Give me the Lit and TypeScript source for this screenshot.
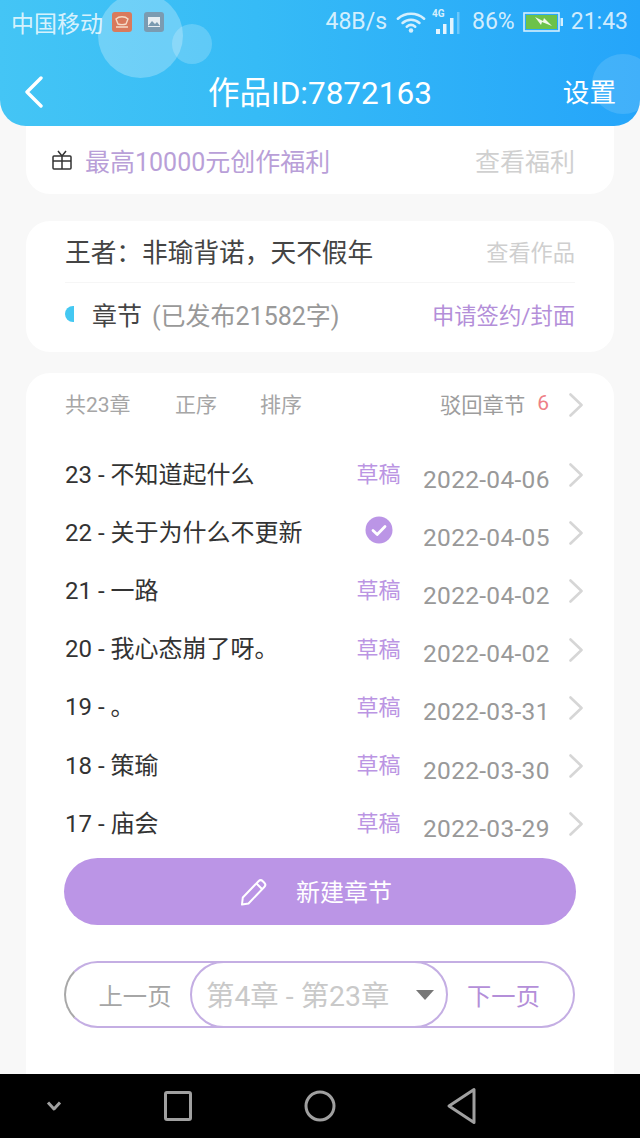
import { LitElement, html, css } from "lit";
import { customElement } from "lit/decorators.js";

const chevron = html`<svg class="chev" width="16" height="24" viewBox="0 0 16 24"><path d="M2.500 1.500 13.500 12 2.500 22.500" fill="none" stroke="#d6d6d6" stroke-width="2.600" stroke-linecap="round" stroke-linejoin="round"/></svg>`;

const rows = [
  ["23 - 不知道起什么", "草稿", "2022-04-06"],
  ["22 - 关于为什么不更新", "", "2022-04-05"],
  ["21 - 一路", "草稿", "2022-04-02"],
  ["20 - 我心态崩了呀。", "草稿", "2022-04-02"],
  ["19 - 。", "草稿", "2022-03-31"],
  ["18 - 策瑜", "草稿", "2022-03-30"],
  ["17 - 庙会", "草稿", "2022-03-29"],
];

@customElement("app-root")
export class AppRoot extends LitElement {
  static styles = css`
    :host {
      display: flex;
      flex-direction: column;
      width: 640px;
      height: 1138px;
      overflow: hidden;
      background: #f8f8f8;
      font-family: Roboto, "Noto Sans CJK SC", sans-serif;
    }
    .header {
      position: relative;
      z-index: 1;
      flex: none;
      height: 126px;
      overflow: hidden;
      box-sizing: border-box;
      border-radius: 0 0 26px 26px;
      background: linear-gradient(90deg, #44c5f5 0%, #36bbf6 40%, #25a5fa 100%);
      color: #fff;
    }
    .bubble { position: absolute; border-radius: 50%; }
    .b1 { left: 98px; top: -7px; width: 85px; height: 85px; background: rgba(255,255,255,.26); }
    .b2 { left: 172px; top: 24px; width: 40px; height: 40px; background: rgba(255,255,255,.2); }
    .b3 { left: 592px; top: 54px; width: 62px; height: 60px; background: rgba(255,255,255,.13); }
    .status {
      position: relative;
      display: flex;
      align-items: center;
      box-sizing: border-box;
      height: 44px;
      padding: 0 12px 1px;
      font-size: 23px;
      color: rgba(255,255,255,.8);
    }
    .carrier { width: 100px; white-space: nowrap; margin-left: -1px; margin-right: 1px; }
    .nicon { width: 20px; height: 20px; border-radius: 3px; margin-right: 12px; display: flex; }
    .n1 { background: #d97a5c; }
    .n2 { background: #7b9bb1; }
    .spacer { flex: 1; }
    .speed { margin-right: 9px; }
    .sig { margin-left: 6px; }
    .pct { margin-left: 11px; margin-right: 8px; }
    .clock { margin-left: 8px; }
    .nav {
      position: relative;
      display: grid;
      grid-template-columns: 80px 1fr 80px;
      align-items: center;
      height: 82px;
      padding: 10px 24px 0;
      box-sizing: border-box;
    }
    .back { display: flex; margin-top: 4px; }
    .title { text-align: center; font-size: 31.5px; white-space: nowrap; }
    .settings { text-align: right; font-size: 26.6px; }
    .page {
      flex: 1;
      display: flex;
      flex-direction: column;
      min-height: 0;
      margin-top: -26px;
      padding: 0 26px;
    }
    .card {
      background: #fff;
      border-radius: 24px;
      box-sizing: border-box;
    }
    .gift {
      display: flex;
      align-items: center;
      height: 94px;
      padding: 25px 39px 0 26px;
      flex: none;
    }
    .gift svg { margin-right: 13px; margin-top: 1px; }
    .gift-t { font-size: 25px; color: #b99fd8; flex: 1; }
    .gift-l { font-size: 25px; color: #d0d0d0; }
    .work { flex: none; height: 131px; margin-top: 27px; padding: 0 39px; }
    .w1 {
      display: flex;
      align-items: center;
      justify-content: space-between;
      height: 62px;
      box-sizing: border-box;
      padding-bottom: 2px;
      border-bottom: 1px solid #f6f6f6;
    }
    .wt { font-size: 25.7px; color: #444; white-space: nowrap; }
    .wl { font-size: 22.2px; color: #cfcfcf; }
    .w2 { display: flex; align-items: center; box-sizing: border-box; height: 66px; padding-bottom: 5px; }
    .half { width: 9px; height: 16px; border-radius: 9px 0 0 9px; background: #44c8f2; margin-right: 18px; }
    .ch { font-size: 25px; color: #444; margin-right: 10px; }
    .pub { flex: 1; font-size: 25px; color: #999; white-space: nowrap; }
    .apply { font-size: 22.3px; color: #b48fd9; white-space: nowrap; }
    .list {
      flex: 1;
      margin-top: 21px;
      padding: 0 30px 0 39px;
      border-radius: 24px 24px 0 0;
      min-height: 0;
      display: flex;
      flex-direction: column;
    }
    .tools { display: flex; align-items: center; height: 60px; font-size: 21px; color: #a6a6a6; flex: none; }
    .tools span:nth-child(1) { width: 110px; }
    .tools span:nth-child(2) { width: 85px; }
    .tools .sp { flex: 1; }
    .rej { color: #9d9d9d; margin-right: 12px; font-size: 21.3px; }
    .num { color: #ee7f86; margin-right: 19px; }
    .tools .chev { margin-top: 4px; }
    .rows { flex: none; margin-top: 10px; }
    .row { display: flex; align-items: center; height: 58.2px; }
    .rname { flex: 1; font-size: 24px; color: #333; white-space: nowrap; }
    .state { width: 44px; font-size: 22px; color: #bb95e3; margin-right: 22.5px; display: flex; justify-content: center; white-space: nowrap; }
    .date { width: 128px; font-size: 24.5px; color: #999; margin-top: 14px; letter-spacing: .3px; margin-right: 17px; white-space: nowrap; }
    .row .chev { flex: none; margin-top: 6px; }
    .new {
      flex: none;
      display: flex;
      align-items: center;
      justify-content: center;
      gap: 28px;
      height: 67px;
      margin: 8px 8px 0 -1px;
      padding: 0 8px 3px 0;
      box-sizing: border-box;
      border-radius: 34px;
      background: #bb95e6;
      color: #fff;
      font-size: 24px;
    }
    .new svg { margin-top: 3px; }
    .pager {
      flex: none;
      height: 67px;
      margin: 36px 9px 0 -1px;
      box-sizing: border-box;
      border-radius: 34px;
      border: 2px solid;
      border-color: #c4aee3 #c4aee3 #c4aee3 #a8a8a8;
      display: grid;
      grid-template-columns: 124px 258px 1fr;
      align-items: center;
      font-size: 24.3px;
    }
    .prev { text-align: center; color: #a6a6a6; padding: 0 0 3px 14px; }
    .sel {
      box-sizing: border-box;
      height: 67px;
      margin-top: -2px;
      border: 2px solid #c4aee3;
      border-radius: 34px;
      background: #fff;
      display: flex;
      align-items: center;
      padding: 0 0 0 14px;
      font-size: 28.4px;
      color: #c9c9c9;
    }
    .sel span { flex: 1; white-space: nowrap; padding-bottom: 3px; }
    .sel svg { margin-right: 12px; }
    .next { text-align: center; color: #b48fd9; padding: 0 14px 3px 0; }
    .sysbar {
      flex: none;
      height: 64px;
      background: #000;
      display: grid;
      grid-template-columns: 107px 142px 142px 142px;
      align-items: center;
      justify-items: center;
    }
  `;

  render() {
    return html`
      <div class="header">
        <div class="bubble b1"></div>
        <div class="bubble b2"></div>
        <div class="bubble b3"></div>
        <div class="status">
          <span class="carrier">中国移动</span>
          <span class="nicon n1"><svg width="20" height="20" viewBox="0 0 20 20"><path d="M4 7c3-3 9-3 12 0l-2 5c-3 1-5 1-8 0ZM4 15h12" fill="none" stroke="#f5dcc8" stroke-width="1.400"/></svg></span>
          <span class="nicon n2"><svg width="20" height="20" viewBox="0 0 20 20"><rect x="4" y="5" width="12" height="10" fill="#e8eef2"/><path d="M4 14l4-5 3 3 2-2 3 4Z" fill="#7b9bb1"/></svg></span>
          <span class="spacer"></span>
          <span class="speed">48B/s</span>
          <svg width="30" height="24" viewBox="0 0 32 24"><g fill="none" stroke="#d5effd" stroke-width="2.800" stroke-linecap="round"><path d="M2 8.500c8-7 20-7 28 0"/><path d="M7 13c5-4.500 13-4.500 18 0"/><path d="M11.500 17c3-2.500 6-2.500 9 0"/></g><circle cx="16" cy="21" r="2.400" fill="#d5effd"/></svg>
          <svg class="sig" width="29" height="28" viewBox="0 0 29 28"><text x="0" y="9" font-size="10" font-weight="700" fill="#d5effd" font-family="Roboto, sans-serif">4G</text><rect x="4" y="21" width="4" height="5" fill="#e3f4fe"/><rect x="11" y="16" width="3.500" height="10" fill="#e3f4fe"/><rect x="18" y="10" width="3.500" height="16" fill="#e3f4fe"/><rect x="25" y="4" width="2.500" height="22" fill="rgba(255,255,255,.3)"/></svg>
          <span class="pct">86%</span>
          <svg width="40" height="20" viewBox="0 0 40 20"><rect x="1" y="1" width="35" height="18" fill="none" stroke="#d5effd" stroke-width="1.600"/><rect x="3" y="3" width="31" height="14" fill="#6cc24a"/><path d="M12 5l8 4 1-3 8 8-10-4-1 3Z" fill="#f1f8e9"/><rect x="37.500" y="6" width="2.500" height="8" fill="#d5effd"/></svg>
          <span class="clock">21:43</span>
        </div>
        <div class="nav">
          <div class="back"><svg width="20" height="32" viewBox="0 0 20 32"><path d="M17 2 3 16l14 14" fill="none" stroke="#fff" stroke-width="3.400" stroke-linecap="round" stroke-linejoin="round"/></svg></div>
          <div class="title">作品ID:7872163</div>
          <div class="settings">设置</div>
        </div>
      </div>
      <div class="page">
        <div class="card gift">
          <svg width="20" height="20" viewBox="0 0 20 20"><g fill="none" stroke="#333" stroke-width="1.500"><rect x="1" y="6" width="18" height="13" rx="1"/><path d="M1 11h18M10 6v13M10 6 6 1M10 6l4-5"/></g></svg>
          <span class="gift-t">最高10000元创作福利</span>
          <span class="gift-l">查看福利</span>
        </div>
        <div class="card work">
          <div class="w1"><span class="wt">王者：非瑜背诺，天不假年</span><span class="wl">查看作品</span></div>
          <div class="w2">
            <span class="half"></span>
            <span class="ch">章节</span>
            <span class="pub">(已发布21582字)</span>
            <span class="apply">申请签约/封面</span>
          </div>
        </div>
        <div class="card list">
          <div class="tools">
            <span>共23章</span><span>正序</span><span>排序</span>
            <span class="sp"></span>
            <span class="rej">驳回章节</span><span class="num">6</span>
            ${chevron}
          </div>
          <div class="rows">
            ${rows.map(
              ([n, s, d]) => html`<div class="row">
                <span class="rname">${n}</span>
                <span class="state">${s ? s : html`<svg width="28" height="28" viewBox="0 0 28 28"><circle cx="14" cy="14" r="13.500" fill="#bb95e6"/><path d="M8 14.500l4.200 4L20 10.500" fill="none" stroke="#fff" stroke-width="2.800" stroke-linecap="round" stroke-linejoin="round"/></svg>`}</span>
                <span class="date">${d}</span>
                ${chevron}
              </div>`
            )}
          </div>
          <div class="new">
            <svg width="28" height="28" viewBox="0 0 28 28"><g fill="none" stroke="#fff" stroke-width="2" stroke-linejoin="round"><path d="M2 26.500l.8-7L18.500 3.200c1.400-1.300 3-1.300 4.300 0l1.500 1.500c1.300 1.300 1.300 3 0 4.300L8.500 25.500Z"/><path d="M16.500 5.500l6 6"/></g></svg>
            <span>新建章节</span>
          </div>
          <div class="pager">
            <span class="prev">上一页</span>
            <div class="sel"><span>第4章 - 第23章</span><svg width="18" height="10" viewBox="0 0 18 10"><path d="M0 0h18L9 10Z" fill="#777"/></svg></div>
            <span class="next">下一页</span>
          </div>
        </div>
      </div>
      <div class="sysbar">
        <svg width="16" height="12" viewBox="0 0 16 12"><path d="M2 2.500 8 9l6-6.500" fill="none" stroke="#a0a0a0" stroke-width="3" stroke-linejoin="round"/></svg>
        <svg width="28" height="30" viewBox="0 0 28 30"><rect x="1.500" y="1.500" width="25" height="27" rx="1.500" fill="none" stroke="#a0a0a0" stroke-width="3"/></svg>
        <svg width="32" height="32" viewBox="0 0 32 32"><circle cx="16" cy="16" r="14" fill="none" stroke="#a0a0a0" stroke-width="3"/></svg>
        <svg width="30" height="38" viewBox="0 0 30 38"><path d="M27 2.500V35.500L2 19Z" fill="none" stroke="#a0a0a0" stroke-width="3" stroke-linejoin="round"/></svg>
      </div>
    `;
  }
}
